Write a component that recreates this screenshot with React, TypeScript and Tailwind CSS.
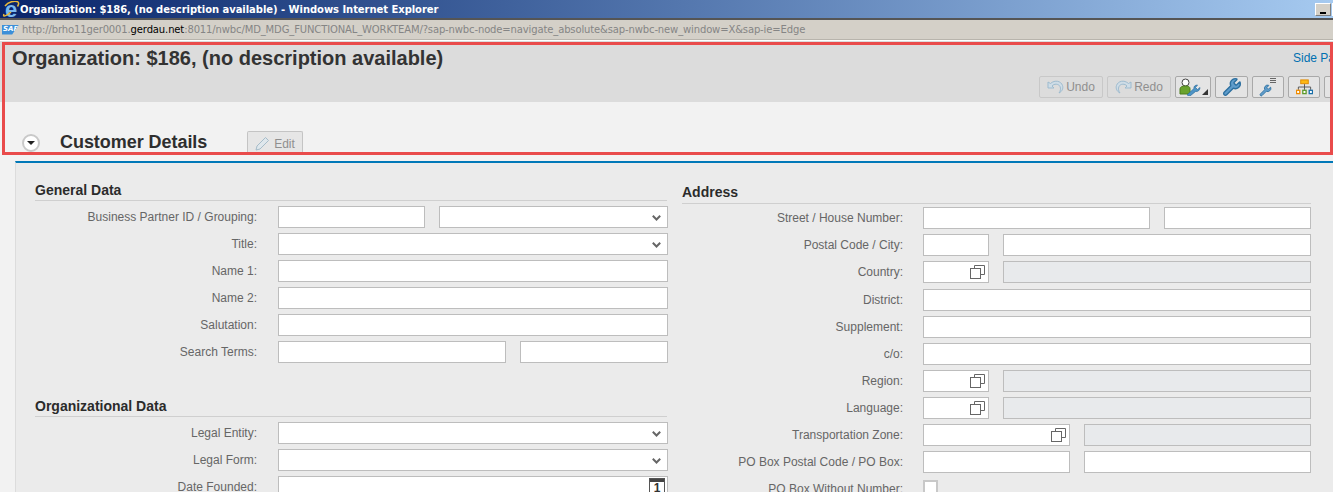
import type { ReactNode } from "react";
import { Wrench } from "lucide-react";

const sans = "font-['Liberation_Sans',Arial,sans-serif]";

function Chevron() {
  return (
    <svg width="9" height="6" viewBox="0 0 9 6" className="absolute right-[6px] top-[8px]">
      <path d="M0.8 0.8 L4.5 4.5 L8.2 0.8" fill="none" stroke="#666" strokeWidth="2" />
    </svg>
  );
}

function CopyIcon() {
  return (
    <svg width="15" height="14" viewBox="0 0 15 14" className="absolute right-[3px] top-[3px]">
      <path d="M4.5 3.5 V0.5 H14.5 V9.5 H11" fill="none" stroke="#666" />
      <rect x="0.5" y="3.5" width="10" height="10" fill="#fff" stroke="#666" />
    </svg>
  );
}

function CalendarIcon() {
  return (
    <span className="absolute right-[2px] top-[1px] flex h-[19px] w-[16px] flex-col items-center border border-[#555] bg-white">
      <span className="h-[3px] w-full bg-[#444]" />
      <span className="text-[12px] font-bold leading-[13px] text-[#333]">1</span>
    </span>
  );
}

function Field({ className, kind }: { className: string; kind?: "select" | "help" | "date" | "off" }) {
  const bg = kind === "off" ? "bg-[#e8eaec]" : "bg-white";
  return (
    <span className={`relative block h-[22px] border border-[#bdbdbd] ${bg} ${className}`}>
      {kind === "select" && <Chevron />}
      {kind === "help" && <CopyIcon />}
      {kind === "date" && <CalendarIcon />}
    </span>
  );
}

function Row({ label, labelWidth, gap, children }: { label: string; labelWidth: string; gap: string; children: ReactNode }) {
  return (
    <div className={`flex h-[27px] items-start ${gap}`}>
      <span className={`${labelWidth} shrink-0 text-right text-[12px] leading-[22px] text-[#666]`}>{label}</span>
      <div className="flex shrink-0 gap-[14px]">{children}</div>
    </div>
  );
}

function Heading({ children, className }: { children: ReactNode; className: string }) {
  return (
    <h3 className={`border-b border-[#cfcfcf] text-[14px] font-bold leading-[18px] text-[#2b2b2b] ${className}`}>
      {children}
    </h3>
  );
}

function LeftRow({ label, children }: { label: string; children: ReactNode }) {
  return (
    <Row label={label} labelWidth="w-[222px]" gap="gap-[21px]">
      {children}
    </Row>
  );
}

function RightRow({ label, children }: { label: string; children: ReactNode }) {
  return (
    <Row label={label} labelWidth="w-[221px]" gap="gap-[20px]">
      {children}
    </Row>
  );
}

function ToolButton({ className, children }: { className: string; children: ReactNode }) {
  return (
    <span className={`relative flex h-[22px] shrink-0 items-center justify-center rounded-[2px] border border-[#a9a9a9] bg-[#e4e4e4] ${className}`}>
      {children}
    </span>
  );
}

function TextButton({ label, flip }: { label: string; flip?: boolean }) {
  return (
    <span className="flex h-[22px] w-[64px] shrink-0 items-center justify-center gap-[2px] rounded-[2px] border border-[#c8c8c8] text-[12px] text-[#8f8f8f]">
      <svg width="17" height="14" viewBox="0 0 17 14" className={flip ? "-scale-x-100" : ""}>
        <path
          d="M1 2 V8 H7 L5 6 C7 3.5 11.5 3.5 13 6.5 C14 8.5 13.5 11 12 13 C15 11.5 16.5 8.5 15.5 5.5 C14 1 8 -0.5 3.5 3.5 Z"
          fill="#cfdde7"
          stroke="#9dbbcf"
        />
      </svg>
      {label}
    </span>
  );
}

function BlueWrench({ size }: { size: number }) {
  return <Wrench size={size} fill="#5f9ccb" stroke="#2c6f9f" strokeWidth={1.6} />;
}

export default function App() {
  return (
    <div className={`h-[492px] w-[1333px] overflow-hidden bg-[#f2f2f2] ${sans}`}>
      {/* window chrome */}
      <div className="flex h-[18px] items-center bg-gradient-to-r from-[#0a246a] to-[#a6caf0]">
        <span className="relative ml-[2px] flex h-[17px] w-[18px] shrink-0 items-center justify-center">
          <span className="font-['Liberation_Sans',sans-serif] text-[22px] font-bold leading-[17px] text-[#79b8f0]">e</span>
          <svg width="18" height="17" viewBox="0 0 18 17" className="absolute inset-0">
            <path d="M2 13 C0 17 6 14 9 11 M3 5 C6 1 13 -1 16 1 C17 2 16.5 4 15.5 5.5" fill="none" stroke="#e8b93a" strokeWidth="1.5" />
          </svg>
        </span>
        <span className="font-['DejaVu_Sans',sans-serif] text-[10px] font-bold tracking-[-0.05px] text-white">
          Organization: $186, (no description available) - Windows Internet Explorer
        </span>
        <span className="ml-auto mr-[-2px] flex gap-px">
          <span className="flex h-[13px] w-[16px] items-end justify-center border border-[#808080] border-l-white border-t-white bg-[#d4d0c8] pb-[1px]">
            <span className="h-[2px] w-[6px] bg-black" />
          </span>
          <span className="h-[13px] w-[3px] border-l border-t border-white bg-[#d4d0c8]" />
        </span>
      </div>
      <div className="h-[2px] bg-[#555]" />
      <div className="flex h-[20px] items-center overflow-hidden whitespace-nowrap border-b border-[#b8b4ac] bg-[#d4d0c8] pl-[2px] font-['DejaVu_Sans',sans-serif] text-[10px] tracking-[-0.13px] text-[#858585]">
        <span className="mr-[3px] flex h-[10px] w-[17px] shrink-0 items-center bg-[#3d8fd8] pl-[1px] text-[7px] font-bold italic leading-none tracking-normal text-white [clip-path:polygon(0_0,100%_0,60%_100%,0_100%)]">
          SAP
        </span>
        <span>http://brho11ger0001.</span>
        <span className="text-black">gerdau.net</span>
        <span>:8011/nwbc/MD_MDG_FUNCTIONAL_WORKTEAM/?sap-nwbc-node=navigate_absolute&amp;sap-nwbc-new_window=X&amp;sap-ie=Edge</span>
      </div>
      <div className="h-px bg-white" />

      {/* highlighted page header */}
      <div className="relative">
        <div className="flex h-[61px] bg-[#dcdcdc]">
          <h1 className="w-[1039px] shrink-0 pl-[12px] pt-[4px] text-[20px] font-bold leading-[26px] text-[#333]">
            Organization: $186, (no description available)
          </h1>
          <div className="min-w-0 flex-1 overflow-hidden">
            <div className="whitespace-nowrap pl-[254px] pt-[10px] text-[12px] leading-[15px] text-[#0070b1]">Side Panel</div>
            <div className="mt-[10px] flex gap-[4px]">
              <TextButton label="Undo" />
              <TextButton label="Redo" flip />
              <ToolButton className="w-[36px]">
                <svg width="22" height="18" viewBox="0 0 22 18" className="mr-[6px]">
                  <circle cx="6.5" cy="4.5" r="3.5" fill="#fff" stroke="#444" />
                  <path d="M1 16 V11 C1 9 3 8 6.5 8 C10 8 11 9 11 11 V16 Z" fill="#6aa32d" stroke="#4c7d1c" />
                  <path d="M8 17 L15 10.5 C14.5 8.5 16 7 18.5 7 L16.5 9.5 L18.5 11.5 L21 9.5 C21 12 19 14 16.5 13.5 L11 18 Z" fill="#4d94c6" stroke="#2c6f9f" strokeWidth="0.7" />
                </svg>
                <span className="absolute bottom-[2px] right-[2px] h-0 w-0 border-b-[6px] border-l-[6px] border-b-[#333] border-l-transparent" />
              </ToolButton>
              <ToolButton className="w-[33px]">
                <BlueWrench size={20} />
              </ToolButton>
              <ToolButton className="w-[32px]">
                <span className="mr-[5px] mt-[6px] flex">
                  <BlueWrench size={13} />
                </span>
                <span className="absolute right-[7px] top-px flex flex-col gap-px">
                  <span className="h-px w-[6px] bg-[#666]" />
                  <span className="h-px w-[6px] bg-[#666]" />
                  <span className="h-px w-[6px] bg-[#666]" />
                </span>
              </ToolButton>
              <ToolButton className="w-[32px]">
                <svg width="17" height="16" viewBox="0 0 18 16">
                  <rect x="5" y="0.5" width="8" height="4" fill="#fdb913" stroke="#e08a00" />
                  <path d="M9 5 V8 M2.5 11 V8 H15.5 V11 M9 8 V11" fill="none" stroke="#555" />
                  <rect x="0.5" y="11.5" width="3.5" height="3.5" fill="#fff" stroke="#f08c00" strokeWidth="1.4" />
                  <rect x="7.2" y="11.5" width="3.5" height="3.5" fill="#fff" stroke="#5d9a2c" strokeWidth="1.4" />
                  <rect x="14" y="11.5" width="3.5" height="3.5" fill="#fff" stroke="#1a6fa8" strokeWidth="1.4" />
                </svg>
              </ToolButton>
              <ToolButton className="w-[32px]">{null}</ToolButton>
            </div>
          </div>
        </div>
        <div className="flex h-[53px] items-end overflow-hidden pl-[22px]">
          <span className="mb-[3px] flex h-[18px] w-[18px] shrink-0 items-center justify-center rounded-full border-2 border-[#c9c9c9] bg-white">
            <span className="h-0 w-0 border-x-[4px] border-t-[4px] border-x-transparent border-t-[#222]" />
          </span>
          <span className="mb-[-1px] ml-[20px] w-[187px] text-[18px] font-bold leading-[27px] tracking-[-0.05px] text-[#2e2e2e]">Customer Details</span>
          <span className="flex h-[24px] w-[56px] items-center justify-center gap-[4px] rounded-t-[2px] border border-b-0 border-[#c4c4c4] bg-[#e6e6e6] text-[12px] text-[#8f8f8f]">
            <svg width="15" height="15" viewBox="0 0 15 15">
              <path d="M1 14 L2 10 L10.5 1.5 L13.5 4.5 L5 13 Z" fill="#dfe7ec" stroke="#a6bcc9" />
            </svg>
            Edit
          </span>
        </div>
        <div className="pointer-events-none absolute bottom-0 left-[2px] right-0 top-[1px] border-[3px] border-[#e94b4b]" />
      </div>

      {/* form panel */}
      <div className="ml-[15px] mt-[6px] h-[400px] border-l border-t-[2px] border-l-[#dcdcdc] border-t-[#0078b8] bg-[#ebebeb]">
        <div className="grid grid-cols-[632px_629px] gap-x-[15px] pl-[19px]">
          <div className="pt-[18px]">
            <Heading className="h-[20px]">General Data</Heading>
            <div className="pt-[5px]">
              <LeftRow label="Business Partner ID / Grouping:">
                <Field className="w-[147px]" />
                <Field className="w-[229px]" kind="select" />
              </LeftRow>
              <LeftRow label="Title:">
                <Field className="w-[390px]" kind="select" />
              </LeftRow>
              <LeftRow label="Name 1:">
                <Field className="w-[390px]" />
              </LeftRow>
              <LeftRow label="Name 2:">
                <Field className="w-[390px]" />
              </LeftRow>
              <LeftRow label="Salutation:">
                <Field className="w-[390px]" />
              </LeftRow>
              <LeftRow label="Search Terms:">
                <Field className="w-[228px]" />
                <Field className="w-[148px]" />
              </LeftRow>
            </div>
            <Heading className="mt-[29px] h-[20px]">Organizational Data</Heading>
            <div className="pt-[5px]">
              <LeftRow label="Legal Entity:">
                <Field className="w-[390px]" kind="select" />
              </LeftRow>
              <LeftRow label="Legal Form:">
                <Field className="w-[390px]" kind="select" />
              </LeftRow>
              <LeftRow label="Date Founded:">
                <Field className="w-[390px]" kind="date" />
              </LeftRow>
            </div>
          </div>
          <div className="pt-[20px]">
            <Heading className="h-[21px]">Address</Heading>
            <div className="pt-[3px]">
              <RightRow label="Street / House Number:">
                <Field className="w-[227px]" />
                <Field className="w-[147px]" />
              </RightRow>
              <RightRow label="Postal Code / City:">
                <Field className="w-[66px]" />
                <Field className="w-[308px]" />
              </RightRow>
              <div className="mb-px">
                <RightRow label="Country:">
                  <Field className="w-[66px]" kind="help" />
                  <Field className="w-[308px]" kind="off" />
                </RightRow>
              </div>
              <RightRow label="District:">
                <Field className="w-[388px]" />
              </RightRow>
              <RightRow label="Supplement:">
                <Field className="w-[388px]" />
              </RightRow>
              <RightRow label="c/o:">
                <Field className="w-[388px]" />
              </RightRow>
              <RightRow label="Region:">
                <Field className="w-[66px]" kind="help" />
                <Field className="w-[308px]" kind="off" />
              </RightRow>
              <RightRow label="Language:">
                <Field className="w-[66px]" kind="help" />
                <Field className="w-[308px]" kind="off" />
              </RightRow>
              <RightRow label="Transportation Zone:">
                <Field className="w-[147px]" kind="help" />
                <Field className="w-[227px]" kind="off" />
              </RightRow>
              <RightRow label="PO Box Postal Code / PO Box:">
                <Field className="w-[147px]" />
                <Field className="w-[227px]" />
              </RightRow>
              <RightRow label="PO Box Without Number:">
                <span className="mt-[2px] block h-[15px] w-[15px] border-2 border-[#c8c8c8] bg-white" />
              </RightRow>
            </div>
          </div>
        </div>
      </div>
    </div>
  );
}
